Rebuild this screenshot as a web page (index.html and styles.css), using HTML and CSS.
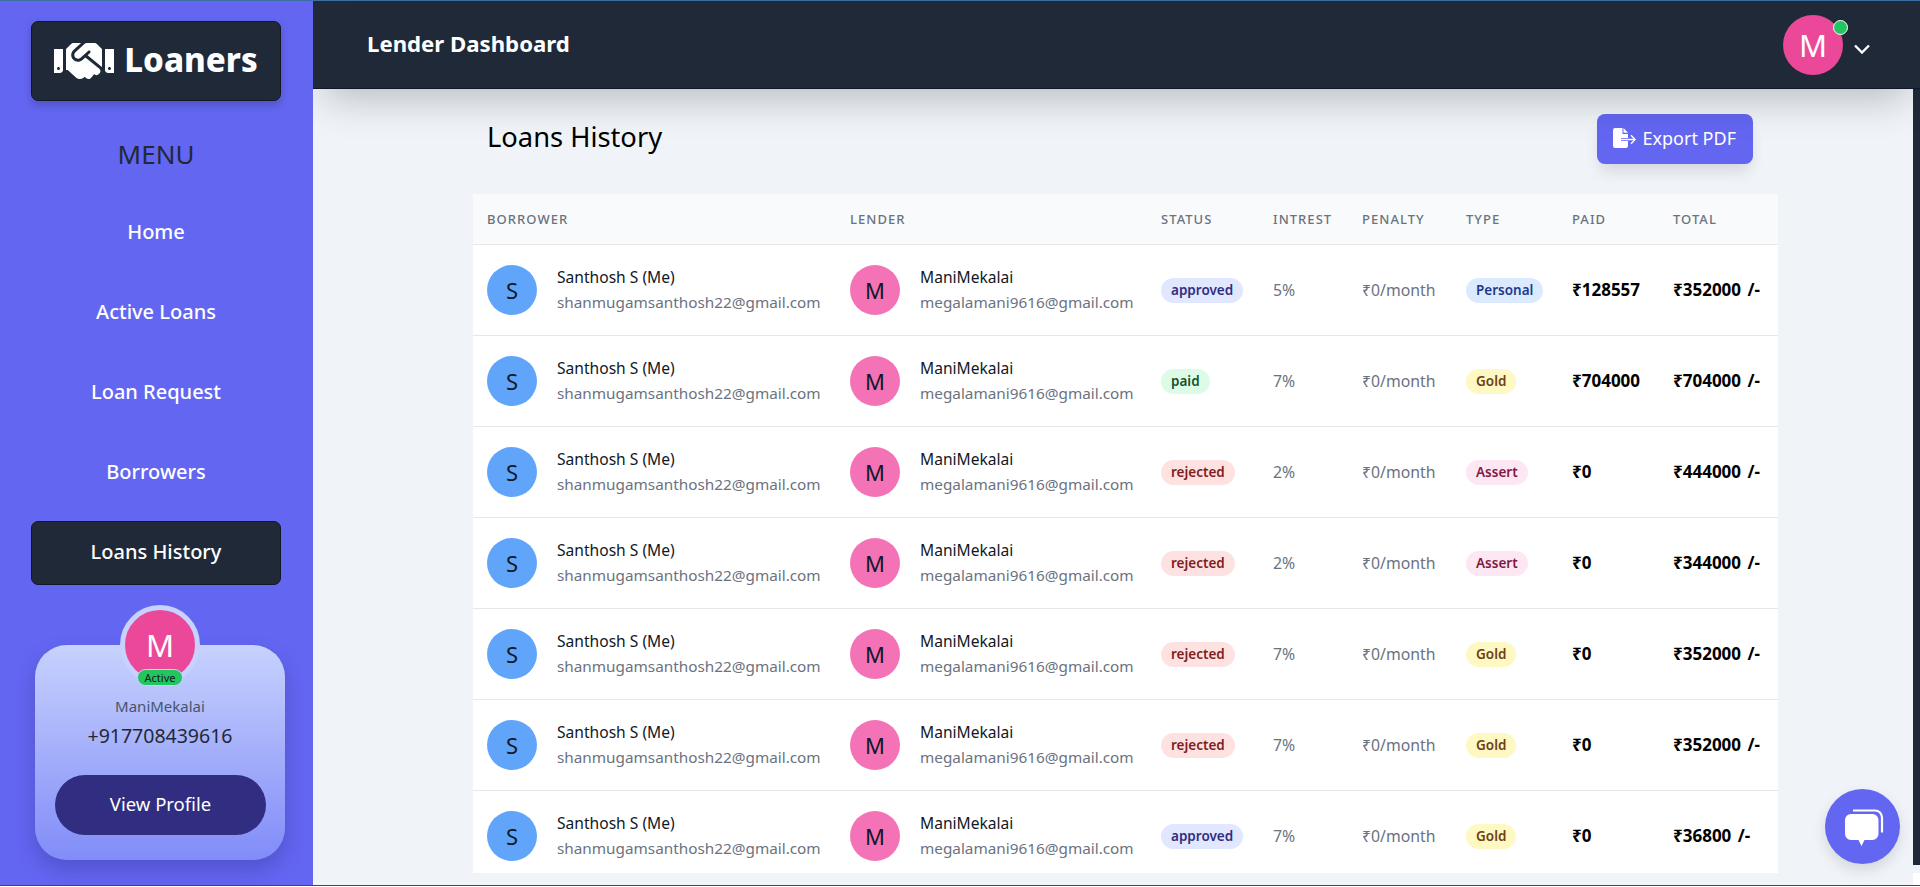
FILE: index.html
```html
<!DOCTYPE html>
<html lang="en">
<head>
    <meta charset="UTF-8">
    <meta name="viewport" content="width=device-width, initial-scale=1.0">
    <title>Loans History</title>
    <link rel="stylesheet" href="styles.css">
</head>
<body>
    <div class="app">
        <aside class="sidebar">
            <a class="logo" href="#">
                <svg class="logo-icon" viewBox="0 0 640 512" fill="#fff"><path d="M434.7 64h-85.9c-8 0-15.7 3-21.6 8.4l-98.3 90c-.1.1-.2.3-.3.4-16.6 15.6-16.3 40.5-2.1 56 12.7 13.9 39.4 17.6 56.1 2.7.1-.1.3-.1.4-.2l79.9-73.2c6.5-5.9 16.7-5.5 22.6 1 6 6.5 5.5 16.6-1 22.6l-26.1 23.9L504 313.8c2.9 2.4 5.5 5 7.9 7.7V128l-54.6-54.6c-5.9-6-14.1-9.4-22.6-9.4zM544 128.2v223.9c0 17.7 14.3 32 32 32h64V128.2h-96zm48 223.9c-8.8 0-16-7.2-16-16s7.2-16 16-16 16 7.2 16 16-7.2 16-16 16zM0 384h64c17.7 0 32-14.3 32-32V128.2H0V384zm48-63.9c8.8 0 16 7.2 16 16s-7.2 16-16 16-16-7.2-16-16c0-8.9 7.2-16 16-16zm435.9 18.6L334.6 217.5l-30 27.5c-29.7 27.1-75.2 24.5-101.7-4.4-26.9-29.4-24.8-74.9 4.4-101.7L289.1 64h-83.8c-8.5 0-16.6 3.4-22.6 9.4L128 128v223.9h18.3l90.5 81.9c27.4 22.3 67.7 18.1 90-9.3l.2-.2 17.9 15.5c15.9 13 39.4 10.5 52.3-5.4l31.4-38.6 5.4 4.4c13.7 11.1 33.9 9.1 45-4.7l9.5-11.7c11.2-13.8 9.1-33.9-4.6-45.1z"/></svg>
                <span class="logo-text">Loaners</span>
            </a>
            <h2 class="menu-title">MENU</h2>
            <nav class="menu">
                <a href="#">Home</a>
                <a href="#">Active Loans</a>
                <a href="#">Loan Request</a>
                <a href="#">Borrowers</a>
                <a href="#" class="active">Loans History</a>
            </nav>
            <div class="profile-card">
                <div class="profile-avatar">
                    M
                    <span class="active-tag">Active</span>
                </div>
                <p class="profile-name">ManiMekalai</p>
                <p class="profile-phone">+917708439616</p>
                <a class="profile-btn" href="#">View Profile</a>
            </div>
        </aside>

        <div class="main">
            <header class="topbar">
                <h1>Lender Dashboard</h1>
                <div class="user-menu">
                    <div class="user-avatar">M<span class="online-dot"></span></div>
                    <svg class="chevron" viewBox="0 0 16 10" fill="none" stroke="#fff" stroke-width="2.4"><path d="M1 1.500 8 8.500l7-7"/></svg>
                </div>
            </header>

            <div class="body-row">
                <section class="content">
                    <div class="content-head">
                        <h2>Loans History</h2>
                        <button class="export-btn">
                            <svg viewBox="0 0 23 20" fill="#fff"><path d="M2 0h7.500v6H15v4H8v3h7v5a2 2 0 0 1-2 2H2a2 2 0 0 1-2-2V2a2 2 0 0 1 2-2z"/><path d="M10.500 0 15 4.800h-4.500z"/><path d="M8 10.800h12.500l-3-3 1-1 4.500 4.700-4.500 4.700-1-1 3-3H8z"/></svg>
                            Export PDF
                        </button>
                    </div>

                    <div class="table-wrap">
                        <table class="loans">
                            <colgroup>
                                <col class="c-borrower"><col class="c-lender"><col class="c-status"><col class="c-interest"><col class="c-penalty"><col class="c-type"><col class="c-paid"><col class="c-total">
                            </colgroup>
                            <thead>
                                <tr>
                                    <th>Borrower</th><th>Lender</th><th>Status</th><th>Intrest</th><th>Penalty</th><th>Type</th><th>Paid</th><th>Total</th>
                                </tr>
                            </thead>
                            <tbody>
                                <tr>
                                    <td><div class="person"><span class="avatar blue">S</span><div class="person-text"><p class="name">Santhosh S (Me)</p><p class="email">shanmugamsanthosh22@gmail.com</p></div></div></td>
                                    <td><div class="person"><span class="avatar pink">M</span><div class="person-text"><p class="name">ManiMekalai</p><p class="email">megalamani9616@gmail.com</p></div></div></td>
                                    <td><span class="badge indigo">approved</span></td>
                                    <td class="muted">5%</td>
                                    <td class="muted">₹0/month</td>
                                    <td><span class="badge sky">Personal</span></td>
                                    <td class="money">₹128557</td>
                                    <td class="money">₹352000 /-</td>
                                </tr>
                                <tr>
                                    <td><div class="person"><span class="avatar blue">S</span><div class="person-text"><p class="name">Santhosh S (Me)</p><p class="email">shanmugamsanthosh22@gmail.com</p></div></div></td>
                                    <td><div class="person"><span class="avatar pink">M</span><div class="person-text"><p class="name">ManiMekalai</p><p class="email">megalamani9616@gmail.com</p></div></div></td>
                                    <td><span class="badge green">paid</span></td>
                                    <td class="muted">7%</td>
                                    <td class="muted">₹0/month</td>
                                    <td><span class="badge yellow">Gold</span></td>
                                    <td class="money">₹704000</td>
                                    <td class="money">₹704000 /-</td>
                                </tr>
                                <tr>
                                    <td><div class="person"><span class="avatar blue">S</span><div class="person-text"><p class="name">Santhosh S (Me)</p><p class="email">shanmugamsanthosh22@gmail.com</p></div></div></td>
                                    <td><div class="person"><span class="avatar pink">M</span><div class="person-text"><p class="name">ManiMekalai</p><p class="email">megalamani9616@gmail.com</p></div></div></td>
                                    <td><span class="badge red">rejected</span></td>
                                    <td class="muted">2%</td>
                                    <td class="muted">₹0/month</td>
                                    <td><span class="badge rose">Assert</span></td>
                                    <td class="money">₹0</td>
                                    <td class="money">₹444000 /-</td>
                                </tr>
                                <tr>
                                    <td><div class="person"><span class="avatar blue">S</span><div class="person-text"><p class="name">Santhosh S (Me)</p><p class="email">shanmugamsanthosh22@gmail.com</p></div></div></td>
                                    <td><div class="person"><span class="avatar pink">M</span><div class="person-text"><p class="name">ManiMekalai</p><p class="email">megalamani9616@gmail.com</p></div></div></td>
                                    <td><span class="badge red">rejected</span></td>
                                    <td class="muted">2%</td>
                                    <td class="muted">₹0/month</td>
                                    <td><span class="badge rose">Assert</span></td>
                                    <td class="money">₹0</td>
                                    <td class="money">₹344000 /-</td>
                                </tr>
                                <tr>
                                    <td><div class="person"><span class="avatar blue">S</span><div class="person-text"><p class="name">Santhosh S (Me)</p><p class="email">shanmugamsanthosh22@gmail.com</p></div></div></td>
                                    <td><div class="person"><span class="avatar pink">M</span><div class="person-text"><p class="name">ManiMekalai</p><p class="email">megalamani9616@gmail.com</p></div></div></td>
                                    <td><span class="badge red">rejected</span></td>
                                    <td class="muted">7%</td>
                                    <td class="muted">₹0/month</td>
                                    <td><span class="badge yellow">Gold</span></td>
                                    <td class="money">₹0</td>
                                    <td class="money">₹352000 /-</td>
                                </tr>
                                <tr>
                                    <td><div class="person"><span class="avatar blue">S</span><div class="person-text"><p class="name">Santhosh S (Me)</p><p class="email">shanmugamsanthosh22@gmail.com</p></div></div></td>
                                    <td><div class="person"><span class="avatar pink">M</span><div class="person-text"><p class="name">ManiMekalai</p><p class="email">megalamani9616@gmail.com</p></div></div></td>
                                    <td><span class="badge red">rejected</span></td>
                                    <td class="muted">7%</td>
                                    <td class="muted">₹0/month</td>
                                    <td><span class="badge yellow">Gold</span></td>
                                    <td class="money">₹0</td>
                                    <td class="money">₹352000 /-</td>
                                </tr>
                                <tr>
                                    <td><div class="person"><span class="avatar blue">S</span><div class="person-text"><p class="name">Santhosh S (Me)</p><p class="email">shanmugamsanthosh22@gmail.com</p></div></div></td>
                                    <td><div class="person"><span class="avatar pink">M</span><div class="person-text"><p class="name">ManiMekalai</p><p class="email">megalamani9616@gmail.com</p></div></div></td>
                                    <td><span class="badge indigo">approved</span></td>
                                    <td class="muted">7%</td>
                                    <td class="muted">₹0/month</td>
                                    <td><span class="badge yellow">Gold</span></td>
                                    <td class="money">₹0</td>
                                    <td class="money">₹36800 /-</td>
                                </tr>
                            </tbody>
                        </table>
                    </div>
                </section>

                <div class="scrollbar">
                    <div class="scroll-thumb"></div>
                    <div class="scroll-end"></div>
                </div>
            </div>
        </div>
    </div>

    <button class="chat-btn">
        <svg viewBox="0 0 40 38" fill="#fff"><path d="M9 1.500h22a7 7 0 0 1 7 7v15" fill="none" stroke="#fff" stroke-width="2.200"/><path d="M7 5h21.500a6 6 0 0 1 6 6v14a6 6 0 0 1-6 6h-8l-3 6-3-6H7a6 6 0 0 1-6-6V11a6 6 0 0 1 6-6z"/></svg>
    </button>
</body>
</html>
```

FILE: styles.css
```css
* {
    box-sizing: border-box;
    font-family: "Noto Sans", "DejaVu Sans", sans-serif;
}
html, body {
    height: 887px;
    margin: 0;
    overflow: hidden;
    background-color: #fff;
}
p, h1, h2 {
    margin: 0;
    font-weight: 400;
}
a {
    text-decoration: none;
}
.app {
    display: flex;
    height: 886px;
    border-top: 1px solid #3c6fa3;
    border-bottom: 1px solid #4a4450;
}

/* Sidebar */
.sidebar {
    position: relative;
    z-index: 5;
    width: 313px;
    flex: none;
    padding: 20px 32px 0 31px;
    background-color: #6366f1;
}
.logo {
    display: flex;
    align-items: center;
    justify-content: center;
    gap: 10px;
    height: 80px;
    background-color: #1f2937;
    border: 1px solid #111827;
    border-radius: 7px;
    box-shadow: 0 4px 8px rgba(0, 0, 0, .2);
    color: #fff;
    font-size: 33px;
    font-weight: 800;
}
.logo-text {
    padding-bottom: 3px;
}
.logo-icon {
    width: 60px;
    height: 48px;
}
.menu-title {
    margin-top: 35px;
    text-align: center;
    font-size: 26px;
    line-height: 36px;
    color: #1f2937;
}
.menu {
    display: flex;
    flex-direction: column;
    gap: 16px;
    margin-top: 29px;
}
.menu a {
    display: flex;
    align-items: center;
    justify-content: center;
    height: 64px;
    padding-bottom: 4px;
    border-radius: 7px;
    color: #fff;
    font-size: 20px;
    font-weight: 500;
}
.menu a.active {
    background-color: #1f2937;
    border: 1px solid #111827;
}
.profile-card {
    position: relative;
    width: 250px;
    height: 215px;
    margin: 60px 0 0 4px;
    padding-top: 49px;
    border-radius: 32px;
    background: linear-gradient(#c7d2fe, #818cf8);
    box-shadow: 0 10px 20px rgba(30, 27, 100, .25);
    text-align: center;
}
.profile-avatar {
    position: absolute;
    top: -40px;
    left: 85px;
    display: flex;
    align-items: center;
    justify-content: center;
    width: 80px;
    height: 80px;
    border: 5px solid #c7d2fe;
    border-radius: 50%;
    background-color: #ec4899;
    color: #fff;
    font-size: 31px;
}
.active-tag {
    position: absolute;
    bottom: -6px;
    left: 12px;
    width: 46px;
    height: 17px;
    border: 1px solid #c7d2fe;
    border-radius: 9px;
    background-color: #22c55e;
    color: #111827;
    font-size: 11px;
    line-height: 15px;
}
.profile-name {
    font-size: 15px;
    line-height: 24px;
    color: #475569;
}
.profile-phone {
    margin-top: 4px;
    font-size: 19.5px;
    line-height: 28px;
    color: #1f2937;
}
.profile-btn {
    display: flex;
    align-items: center;
    justify-content: center;
    width: 211px;
    height: 60px;
    margin: 25px 0 0 20px;
    padding-bottom: 3px;
    border-radius: 30px;
    background-color: #312e81;
    color: #fff;
    font-size: 18.5px;
}

/* Main */
.main {
    flex: 1;
    display: flex;
    flex-direction: column;
    min-width: 0;
}
.topbar {
    position: relative;
    z-index: 3;
    display: flex;
    align-items: center;
    justify-content: space-between;
    height: 88px;
    flex: none;
    padding: 0 50px 0 54px;
    background-color: #1f2937;
    border-bottom: 1px solid #0f172a;
    box-shadow: 0 20px 40px -12px rgba(0, 0, 0, .25);
}
.topbar h1 {
    padding-bottom: 3px;
    font-size: 22.2px;
    font-weight: 700;
    color: #fff;
}
.user-menu {
    display: flex;
    align-items: center;
    gap: 11px;
}
.user-avatar {
    position: relative;
    display: flex;
    align-items: center;
    justify-content: center;
    width: 60px;
    height: 60px;
    border-radius: 50%;
    background-color: #ec4899;
    color: #fff;
    font-size: 31px;
}
.online-dot {
    position: absolute;
    top: 5px;
    right: -5px;
    width: 15px;
    height: 15px;
    border: 1px solid #fff;
    border-radius: 50%;
    background-color: #22c55e;
}
.chevron {
    width: 16px;
    height: 10px;
    margin-top: 8px;
}
.body-row {
    flex: 1;
    display: flex;
    min-height: 0;
}
.content {
    flex: 1;
    display: flex;
    flex-direction: column;
    min-width: 0;
    padding: 25px 135px 12px 160px;
    background-color: #f0f4f9;
}
.content-head {
    display: flex;
    align-items: center;
    justify-content: space-between;
    flex: none;
    height: 50px;
    margin-bottom: 30px;
    padding: 0 25px 0 14px;
}
.content-head h2 {
    padding-bottom: 5px;
    font-size: 27.3px;
    color: #000;
}
.export-btn {
    display: flex;
    align-items: center;
    gap: 7px;
    height: 50px;
    padding: 0 17px 2px 16px;
    border: none;
    border-radius: 8px;
    background-color: #6366f1;
    box-shadow: 0 10px 15px -3px rgba(0, 0, 0, .12);
    color: #fff;
    font-size: 18px;
}
.export-btn svg {
    width: 23px;
    height: 20px;
}
.table-wrap {
    flex: 1;
    min-height: 0;
    overflow: hidden;
    background-color: #fff;
}
.loans {
    width: 100%;
    table-layout: fixed;
    border-collapse: collapse;
}
.c-borrower { width: 363px; }
.c-lender { width: 311px; }
.c-status { width: 112px; }
.c-interest { width: 89px; }
.c-penalty { width: 104px; }
.c-type { width: 106px; }
.c-paid { width: 101px; }
.c-total { width: 119px; }
.loans th {
    height: 50px;
    padding: 0 0 0 14px;
    border-bottom: 1px solid #e5e7eb;
    background-color: #f9fafb;
    color: #6b7280;
    font-size: 13px;
    font-weight: 500;
    letter-spacing: .08em;
    text-align: left;
    text-transform: uppercase;
}
.loans td {
    height: 91px;
    padding: 0 0 0 14px;
    border-bottom: 1px solid #e5e7eb;
    white-space: nowrap;
}
.person {
    display: flex;
    align-items: center;
    gap: 20px;
}
.person-text {
    padding-bottom: 1px;
}
.avatar {
    display: flex;
    align-items: center;
    justify-content: center;
    flex: none;
    width: 50px;
    height: 50px;
    border-radius: 50%;
    color: #111827;
    font-size: 22px;
}
.avatar.blue { background-color: #60a5fa; }
.avatar.pink { background-color: #f472b6; }
.name {
    font-size: 15.6px;
    line-height: 25px;
    color: #111827;
}
.email {
    font-size: 15.3px;
    line-height: 24px;
    color: #6b7280;
}
.muted {
    font-size: 15.8px;
    color: #6b7280;
}
.money {
    font-size: 17px;
    font-weight: 700;
    word-spacing: 2px;
    color: #000;
}
.badge {
    display: inline-block;
    height: 25px;
    margin-top: 2px;
    padding: 0 10px;
    border-radius: 13px;
    font-size: 13.5px;
    font-weight: 600;
    line-height: 25px;
    vertical-align: middle;
}
.badge.indigo { background-color: #e0e7ff; color: #312e81; }
.badge.sky { background-color: #dbeafe; color: #1e3a8a; }
.badge.green { background-color: #dcfce7; color: #14532d; }
.badge.yellow { background-color: #fef9c3; color: #713f12; }
.badge.red { background-color: #fee2e2; color: #7f1d1d; }
.badge.rose { background-color: #fce7f3; color: #831843; }

/* Scroll strip on the right edge */
.scrollbar {
    display: flex;
    flex-direction: column;
    width: 7px;
    flex: none;
    background-color: #f0f4f9;
}
.scroll-thumb {
    flex: 1;
    background-color: #1f2937;
}
.scroll-end {
    height: 12px;
    margin-top: 8px;
    background-color: #fff;
}

.chat-btn {
    position: fixed;
    top: 789px;
    left: 1825px;
    z-index: 9;
    display: flex;
    align-items: center;
    justify-content: center;
    width: 75px;
    height: 75px;
    padding: 2px 0 0 2px;
    border: none;
    border-radius: 50%;
    background-color: #6366f1;
    box-shadow: 0 6px 14px rgba(0, 0, 0, .12);
}
.chat-btn svg {
    width: 40px;
    height: 38px;
}
```
